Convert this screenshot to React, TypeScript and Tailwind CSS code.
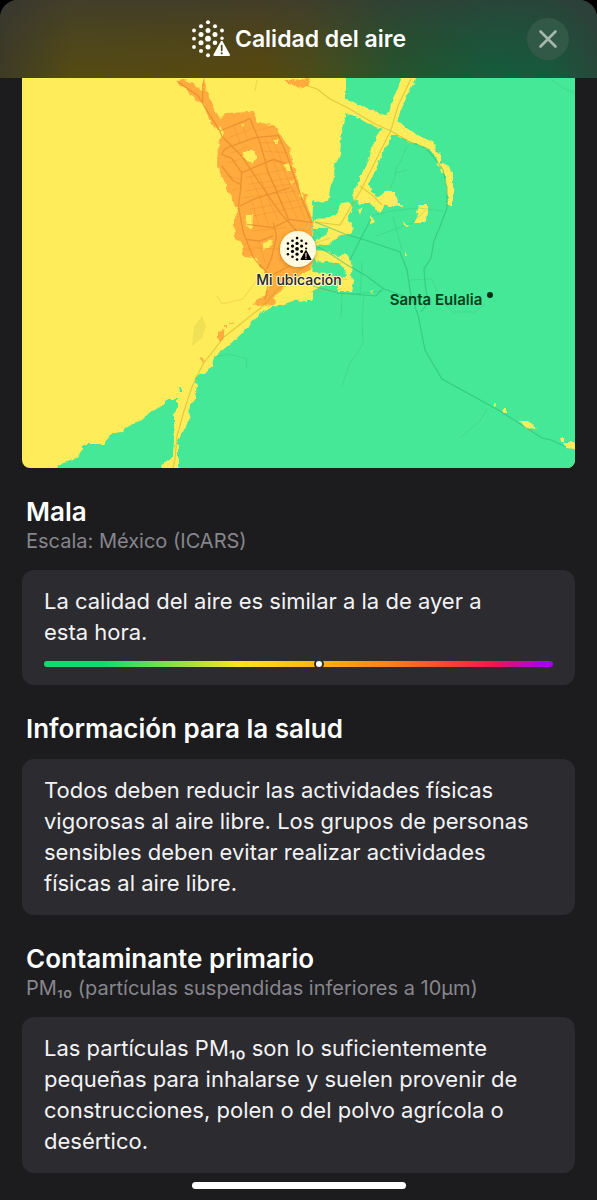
import React from 'react';

type Dot = [number, number, number];

const dots: Dot[] = [
  [3, 10.5, 1.9], [3, 18.7, 1.9], [3, 27, 1.9],
  [10, 6.2, 2], [10, 14.4, 2.5], [10, 22.7, 2.5], [10, 31, 2],
  [17, 2.2, 2], [17, 10.4, 2.5], [17, 18.7, 2.9], [17, 27, 2.5], [17, 35.2, 2],
  [24, 6.2, 2], [24, 14.4, 2.5], [24, 22.7, 2.3],
  [31, 10.5, 1.9], [31, 18.2, 1.7],
];

function AirGlyph({ mark }: { mark: string }) {
  return (
    <g fill="currentColor">
      {dots.map(([x, y, r]) => (
        <circle key={`${x}-${y}`} cx={x} cy={y} r={r} />
      ))}
      <path d="M30.7 21.7L38 35H23.4Z" stroke="currentColor" strokeWidth="2" strokeLinejoin="round" />
      <path d="M30.7 25.6v4.8" stroke={mark} strokeWidth="1.7" strokeLinecap="round" />
      <circle cx="30.7" cy="33.3" r="1.1" fill={mark} />
    </g>
  );
}

function AirMap() {
  return (
    <svg viewBox="22 78 553 390" className="block h-auto w-full rounded-b-lg" role="img" aria-label="Mapa de calidad del aire">
      <defs>
        <filter id="rough" x="-5%" y="-5%" width="110%" height="110%">
          <feTurbulence type="fractalNoise" baseFrequency="0.16" numOctaves="2" seed="4" />
          <feDisplacementMap in="SourceGraphic" scale="5" xChannelSelector="R" yChannelSelector="G" />
        </filter>
        <filter id="shade" x="-40%" y="-40%" width="180%" height="180%">
          <feDropShadow dx="0" dy="1" stdDeviation="2" floodColor="#7a4a00" floodOpacity="0.45" />
        </filter>
      </defs>
      <rect x="22" y="78" width="553" height="390" fill="#ffec5a" />

      <g filter="url(#rough)">
        <path fill="#45e896" d="M346 70V112L343 125 341 140 340 155 335 165 334 178 330 188 329 198 322 203 313 200 312 240 313 300 292 301 283 304 275 306 265 309 258 316 250 325 238 337 224 349 214 357 212 366 205 374 200 374 195 378 197 385 195 400 190 405 189 420 185 428 180 437 178 440V480H590V70Z" />
        <path fill="#45e896" d="M50 472L68 461 77 458 84 448V444H103L113 433 122 432 128 426 141 421 152 410 159 409 168 399H177L177 408 174 415V440L173 456 163 464 161 472ZM179 387h3v5h-2z" />

        <g fill="#ffec5a">
          <path d="M340 99L353 101 367 109 374 111 383 114 391 117 397 122 408 128 417 135 425 139 433 141 436 150 441 155 441 162 449 167 453 173V205H448L446 185 445 176 439 166 436 158 431 150 420 145 411 143 397 136 384 130 367 123 353 115 342 114Z" />
          <path d="M403 74L396 94 389 108 385 124 378 134 371 149 369 160 363 171 357 185 352 195 356 201 366 192 370 182 376 169 381 156 391 138 396 122 402 108 407 96 415 80 419 74Z" />
          <path d="M358 183L367 181 372 191 376 197 382 196 385 190 395 192 398 202 403 206 392 207 386 205 380 213 375 208 370 203 361 203 353 199Z" />
          <path d="M313 219L330 218 339 212 341 203 349 202 352 209 347 218 353 228 352 234 340 235 332 243 317 246 312 242 326 234 329 228 313 228Z" />
          <path d="M313 250L327 251 336 256 344 254 350 258 352 267 351 275 354 282 352 291 340 291 336 284 346 276 344 268 337 263 315 261Z" />
          <path d="M312 272L330 273 336 280 318 288 313 292 312 301 306 301V272ZM419 204L428 204 428 212 424 223 415 223ZM371 214l4 8-5 2zM358 211l5-3-3 6zM403 221l5 6-3 1zM404 252l5 4h-4zM370 292l4-2-1 4z" />
          <path d="M521 421L529 421 537 429 524 427ZM493 403h3v4h-2zM503 409h3v4h-2zM562 442L579 442V450L567 448ZM560 437h3v4h-2z" />
        </g>

        <g fill="#ffab3d">
          <path d="M225 113L253 112 258 122 275 126 282 137 290 150 293 165 298 180 300 196 305 200 309 211 313 222 311 238 314 250 311 270 295 278 285 287 275 295 274 305 263 306 252 304 266 294 270 284 265 274 256 258 243 257 242 242 235 239 234 222 238 210 231 197 225 183 217 165 218 147 223 133 219 123Z" />
          <path d="M180 79L191 82 203 91 203 74 207 92 214 107 221 121 219 130 211 124 204 106 194 97 186 89 176 84ZM284 80L311 79 309 85 302 88 289 84ZM303 192L307 195 304 208ZM218 332l6-3 1 6-5 6-2-3zM224 327l4-2v4zM229 322l7 1-6 1zM247 310l3-2-1 4zM201 357l3 1-1 6z" />
        </g>

        <g fill="#ffec5a">
          <path d="M243 151L254 151 257 157 254 163 247 161 242 157ZM284 164L291 164 291 171 286 171ZM240 124h4l-1 4zM274 140h4v4h-3zM247 215L252 215 251 228 246 227ZM263 243L273 240 269 247 263 250ZM290 180l5 1-3 3z" />
        </g>
      </g>

      <path d="M194 327L202 316 206 326 202 338 192 346Z" fill="#c5bb48" opacity="0.25" />

      <g transform="translate(170 76) scale(0.3333)" fill="none" strokeLinejoin="round">
        <path stroke="#df862a" strokeOpacity="0.65" strokeWidth="4" d="M20 15L85 60 105 95 150 165 155 180 215 240 275 330 330 410 380 465M150 165L240 128 270 200 295 290 330 370 355 430M155 235Q160 218 180 212L255 185 325 178 350 235 375 310 400 380 425 440M155 235L185 247 215 290 212 340 205 390 220 470 250 545 300 600M215 290L310 250 345 262M210 390L250 370 360 335M230 445L310 455 360 430 425 440M310 440L320 480 305 545 290 580M225 490L270 495 310 480M360 570L300 600 285 670M155 270L190 315 212 325M98 20L98 80" />
        <path stroke="#e38d2c" strokeOpacity="0.42" strokeWidth="2.4" d="M192 148L210 200M215 138L232 192M175 185L245 158M255 165L315 150M270 200L335 200M275 225L350 230M285 250L360 265M225 305L345 280M235 325L370 305M225 345L375 322M218 365L380 345M240 400L395 370M250 420L400 390M240 300L270 365M262 290L300 372M282 268L325 350M310 255L345 345M330 255L370 350M245 375L265 445M270 365L295 450M290 360L325 435M320 350L355 425M345 345L385 435M365 330L405 430M245 465L350 455M250 515L330 520M265 495L285 560M340 470L330 560M285 190L315 250M305 182L335 255M180 232L235 212M175 260L210 250M170 300L212 310M185 345L212 335M220 520L250 520M330 590L360 545" />
      </g>

      <g fill="none" stroke="#c8a91e" strokeOpacity="0.5" strokeWidth="1.2">
        <path d="M305 85L317 89 330 99 348 108 375 124 391 131 410 142" />
        <path d="M411 79L398 106 391 130 376 160 361 190 350 208 340 225 315 222" />
        <path d="M304 266L277 290 263 306 238 326 224 337 203 364 192 387 184 411 177 436 175 459 173 468" />
        <path d="M360 186L372 195 382 205" />
      </g>
      <g fill="none" stroke="#d7ae39" strokeOpacity="0.4" strokeWidth="0.9">
        <path d="M217 296L222 304 243 299 251 288 256 281M257 80L255 91M308 282L326 276 348 280M310 292L342 289M309 268L337 264" />
      </g>
      <g fill="none" stroke="#24b670" strokeOpacity="0.5" strokeWidth="1.2">
        <path d="M410 142L426 148 436 160 443 170 447 188 447 208 441 224 434 241 431 258 424 269 425 283 428 303 421 312" />
        <path d="M315 222L345 234 365 240 400 252 407 270 411 296 418 315 425 350 442 379 500 411 542 438 551 440 566 447" />
        <path d="M315 245L332 255 347 265 365 275 384 289 404 296M313 286L338 293 376 296 382 289" />
        <path d="M350 260L360 240 371 219" />
      </g>
      <g fill="none" stroke="#31bd79" strokeOpacity="0.34" strokeWidth="0.9">
        <path d="M407 146L401 160 396 169 395 177 390 189M395 173L407 170M370 216L391 211 419 208 443 211M376 236L412 223 426 210M393 217L402 250M410 280L432 279 441 301 453 312 475 312 484 305M364 296L362 318 363 344 349 365 342 386M342 293L341 318M362 261L360 298M351 294L384 291M487 409L480 421 460 438M552 80L565 89 575 93M214 357L228 354 246 358 247 368M330 238L313 244M321 236L313 229" />
      </g>

      <circle cx="298" cy="249" r="18" fill="#fffbe0" filter="url(#shade)" />
      <svg x="286" y="236" width="26" height="26" viewBox="0 0 40 38" className="text-black">
        <AirGlyph mark="#f6f0d6" />
      </svg>
      <g className="font-['Inter',sans-serif]">
        <text x="299" y="285" textAnchor="middle" className="text-[14px] font-medium" fill="#252420" stroke="#fff5c8" strokeWidth="2" strokeLinejoin="round" paintOrder="stroke">Mi ubicación</text>
        <text x="436" y="305" textAnchor="middle" className="text-[15px] font-semibold" fill="#063e1d">Santa Eulalia</text>
      </g>
      <circle cx="490" cy="295" r="3" fill="#062d18" />
    </svg>
  );
}

function Card({ children }: { children: React.ReactNode }) {
  return (
    <div className="rounded-xl bg-[#2c2b30] px-[22px] py-4 text-[22px] leading-[31px] text-[#f3f3f5]">
      {children}
    </div>
  );
}

function SectionTitle({ title, detail }: { title: string; detail?: string }) {
  return (
    <div className={detail ? 'mb-4 px-1' : 'mb-[14px] px-1'}>
      <h2 className="text-[26px] leading-8 font-semibold text-white">{title}</h2>
      {detail && <p className="text-[20px] leading-[26px] text-[#87868c]">{detail}</p>}
    </div>
  );
}

export default function App() {
  return (
    <div className="bg-black font-['Inter',sans-serif]">
      <div className="min-h-screen overflow-hidden rounded-t-[18px] bg-[#1c1c1e]">
        <header className="grid h-[78px] grid-cols-[1fr_auto_1fr] items-center bg-[linear-gradient(to_bottom,#35353899_0%,#35353840_50%,#35353800_100%),linear-gradient(to_right,#3d3b25_0%,#554b13_12%,#57490f_44%,#4d4c18_52%,#25542d_66%,#155c3b_82%,#175a3d_92%,#26483a_100%)] px-7">
          <div />
          <div className="flex items-center gap-1">
            <svg viewBox="0 0 40 38" className="h-[38px] w-10 text-white" aria-hidden="true">
              <AirGlyph mark="#4f4918" />
            </svg>
            <h1 className="text-[23px] leading-7 font-semibold text-white">Calidad del aire</h1>
          </div>
          <button type="button" aria-label="Cerrar" className="flex size-[42px] items-center justify-center justify-self-end rounded-full bg-[#325848] text-[#a5b8af]">
            <svg viewBox="0 0 20 20" className="size-5" fill="none" stroke="currentColor" strokeWidth="2.7" strokeLinecap="round" aria-hidden="true">
              <path d="M2.5 2.5l15 15M17.5 2.5l-15 15" />
            </svg>
          </button>
        </header>

        <main className="flex flex-col gap-7 px-[22px]">
          <AirMap />

          <section>
            <SectionTitle title="Mala" detail="Escala: México (ICARS)" />
            <Card>
              <p className="pr-6">La calidad del aire es similar a la de ayer a esta hora.</p>
              <div className="relative mt-[13px] mb-[2px] h-[6px] rounded-full bg-[linear-gradient(to_right,#10dc70_0%,#10dc70_12%,#fce51e_38%,#ffac10_56%,#fb7b1b_69%,#f4164b_88%,#a700ed_98%)]" role="img" aria-label="Índice de calidad del aire">
                <span className="absolute top-1/2 left-[54%] size-[10px] -translate-x-1/2 -translate-y-1/2 rounded-full border-2 border-[#2c2b30] bg-white" />
              </div>
            </Card>
          </section>

          <section>
            <SectionTitle title="Información para la salud" />
            <Card>
              <p>Todos deben reducir las actividades físicas vigorosas al aire libre. Los grupos de personas sensibles deben evitar realizar actividades físicas al aire libre.</p>
            </Card>
          </section>

          <section>
            <SectionTitle title="Contaminante primario" detail="PM₁₀ (partículas suspendidas inferiores a 10µm)" />
            <Card>
              <p>Las partículas PM₁₀ son lo suficientemente pequeñas para inhalarse y suelen provenir de construcciones, polen o del polvo agrícola o desértico.</p>
            </Card>
          </section>
        </main>
        <div className="mx-auto mt-[9px] mb-[11px] h-[7px] w-[214px] rounded-full bg-white" />
      </div>
    </div>
  );
}
